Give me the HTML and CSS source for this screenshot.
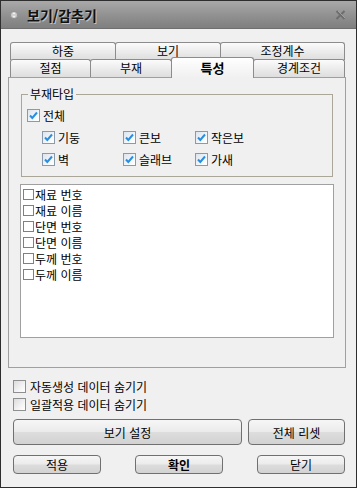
FILE: index.html
```html
<!DOCTYPE html>
<html lang="ko">
<head>
  <meta charset="UTF-8">
  <title>보기/감추기</title>
  <link rel="stylesheet" href="styles.css">
</head>
<body>
  <div class="window">
    <div class="titlebar">
      <svg class="title-icon" width="8" height="10" viewBox="0 0 8 10">
        <circle cx="4" cy="5" r="3.6" fill="#c9c9c9" stroke="#8d8d8d" stroke-width="0.8"/>
        <path d="M2.2 4.2 L4 2.3 L5.8 4.2 Z M2.2 5.8 L4 7.7 L5.8 5.8 Z" fill="#f4f4f4"/>
      </svg>
      <span class="title">보기/감추기</span>
      <svg class="close" width="11" height="10" viewBox="0 0 11 10">
        <path d="M1.5 1 L9.5 9 M9.5 1 L1.5 9" stroke="#6e6e6e" stroke-width="2"/>
        <path d="M3 1 L10 8" stroke="#a8a8a8" stroke-width="0.8"/>
      </svg>
    </div>

    <div class="content">
      <div class="tabs">
        <div class="tab-row">
          <div class="tab t106">하중</div>
          <div class="tab t106">보기</div>
          <div class="tab t125">조정계수</div>
        </div>
        <div class="tab-row">
          <div class="tab t81">절점</div>
          <div class="tab t82">부재</div>
          <div class="tab t83 active">특성</div>
          <div class="tab t92">경계조건</div>
        </div>
      </div>

      <div class="panel">
        <fieldset class="group">
          <legend>부재타입</legend>
          <label class="chk all"><span class="box on"><svg width="11" height="11" viewBox="0 0 11 11"><path d="M2 5.5 L4.3 8 L9 2.5" fill="none" stroke="#2a8ee0" stroke-width="2"/></svg></span>전체</label>
          <div class="types">
            <label class="chk"><span class="box on"><svg width="11" height="11" viewBox="0 0 11 11"><path d="M2 5.5 L4.3 8 L9 2.5" fill="none" stroke="#2a8ee0" stroke-width="2"/></svg></span>기둥</label>
            <label class="chk"><span class="box on"><svg width="11" height="11" viewBox="0 0 11 11"><path d="M2 5.5 L4.3 8 L9 2.5" fill="none" stroke="#2a8ee0" stroke-width="2"/></svg></span>큰보</label>
            <label class="chk"><span class="box on"><svg width="11" height="11" viewBox="0 0 11 11"><path d="M2 5.5 L4.3 8 L9 2.5" fill="none" stroke="#2a8ee0" stroke-width="2"/></svg></span>작은보</label>
            <label class="chk"><span class="box on"><svg width="11" height="11" viewBox="0 0 11 11"><path d="M2 5.5 L4.3 8 L9 2.5" fill="none" stroke="#2a8ee0" stroke-width="2"/></svg></span>벽</label>
            <label class="chk"><span class="box on"><svg width="11" height="11" viewBox="0 0 11 11"><path d="M2 5.5 L4.3 8 L9 2.5" fill="none" stroke="#2a8ee0" stroke-width="2"/></svg></span>슬래브</label>
            <label class="chk"><span class="box on"><svg width="11" height="11" viewBox="0 0 11 11"><path d="M2 5.5 L4.3 8 L9 2.5" fill="none" stroke="#2a8ee0" stroke-width="2"/></svg></span>가새</label>
          </div>
        </fieldset>

        <div class="list">
          <div class="item"><span class="sbox"></span>재료 번호</div>
          <div class="item"><span class="sbox"></span>재료 이름</div>
          <div class="item"><span class="sbox"></span>단면 번호</div>
          <div class="item"><span class="sbox"></span>단면 이름</div>
          <div class="item"><span class="sbox"></span>두께 번호</div>
          <div class="item"><span class="sbox"></span>두께 이름</div>
        </div>
      </div>

      <div class="options">
        <label class="opt"><span class="box"></span>자동생성 데이터 숨기기</label>
        <label class="opt"><span class="box"></span>일괄적용 데이터 숨기기</label>
      </div>

      <div class="btn-row big">
        <button class="btn wide">보기 설정</button>
        <button class="btn reset">전체 리셋</button>
      </div>
      <div class="btn-row small">
        <button class="btn">적용</button>
        <button class="btn bold">확인</button>
        <button class="btn">닫기</button>
      </div>
    </div>
  </div>
</body>
</html>
```

FILE: styles.css
```css
*{margin:0;padding:0;box-sizing:border-box;}
body{width:357px;height:488px;font-family:"Noto Sans CJK KR","Liberation Sans",sans-serif;font-size:12px;color:#000;background:#f0f0f0;}

.window{width:357px;height:488px;border:1px solid #2e2e2e;background:#f0f0f0;display:flex;flex-direction:column;}

/* 타이틀바 */
.titlebar{height:28px;flex:none;display:flex;align-items:center;padding:0 10px 0 9px;background:linear-gradient(#a9a9a9,#8e8e8e 60%,#7f7f7f);border-bottom:1px solid #6f6f6f;}
.title-icon{flex:none;}
.title{margin-left:9px;font-size:14px;font-weight:bold;color:#111;text-shadow:1px 1px 0 #c4c4c4;}
.close{margin-left:auto;}

.content{padding:13px 10px 0 7px;}

/* 탭 */
.tabs{margin:0 1px 0 2px;}
.tab-row{display:flex;}
.tab-row:first-child{height:17px;}
.tab-row:last-child{height:18px;}
.tab{flex:none;height:100%;text-align:center;line-height:16px;border:1px solid #8c8c8c;border-bottom:none;border-radius:3px 3px 0 0;background:linear-gradient(#fbfbfb,#e9e9e9 60%,#dedede);margin-left:-1px;}
.tab:first-child{margin-left:0;}
.tab-row:first-child .tab{height:18px;}
.t106{width:106px;}
.t125{width:125px;}
.t81{width:81px;}
.t82{width:82px;}
.t83{width:83px;}
.t92{width:92px;}
.tab.active{position:relative;z-index:1;height:21px;margin-top:-2px;font-weight:bold;font-size:13px;line-height:20px;background:linear-gradient(#ffffff,#f7f7f7 50%,#f0f0f0);}

/* 패널 */
.panel{width:338px;height:291px;border:1px solid #a0a0a0;padding:8px 12px 0 12px;}

.group{border:1px solid #aaa698;padding:0 0 6px 5px;}
.group legend{line-height:16px;padding:0 2px;margin-left:1px;}
.chk{display:flex;align-items:center;height:22px;}
.chk.all{margin-top:2px;}
.types{display:grid;grid-template-columns:81px 72px 1fr;padding-left:15px;}

.box{width:13px;height:13px;flex:none;margin-right:3px;border:1px solid #8e8f8f;background:linear-gradient(135deg,#dcdcdc,#f7f7f7 70%,#fff);display:flex;align-items:center;justify-content:center;}
.box.on{border-color:#8a9aab;background:linear-gradient(135deg,#dde4ec,#f6f9fc 70%,#fff);}

.list{margin:7px -1px 0;height:154px;border:1px solid #a0a0a0;background:#fff;padding:1px 0 0 2px;}
.item{display:flex;align-items:center;height:16px;}
.sbox{width:11px;height:11px;flex:none;margin-right:1px;border:1px solid #808080;}

/* 옵션 */
.options{padding:9px 0 0 5px;}
.opt{display:flex;align-items:center;height:18px;}
.opt .box{margin-right:4px;}

/* 버튼 */
.btn-row{display:flex;margin:0 1px 0 5px;}
.btn{font-family:inherit;font-size:12px;color:#000;border:1px solid #707070;border-radius:4px;background:linear-gradient(#f6f6f6,#ebebeb 48%,#dddddd 52%,#d2d2d2);}
.big{margin-top:6px;height:26px;gap:6px;}
.wide{width:229px;}
.reset{width:97px;}
.small{margin-top:10px;height:19px;justify-content:space-between;}
.small .btn{width:88px;}
.btn.bold{font-weight:bold;}
```
